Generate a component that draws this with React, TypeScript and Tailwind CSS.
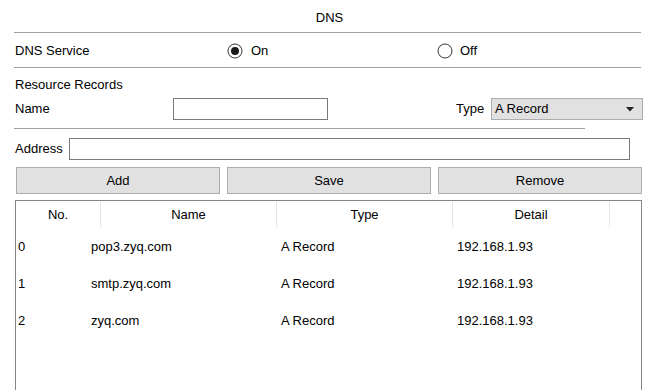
import React from "react";

function Radio({ checked }: { checked: boolean }) {
  return (
    <svg width="16" height="16" viewBox="0 0 16 16" className="shrink-0">
      <circle cx="8" cy="8" r="7" fill="#fff" stroke="#333" strokeWidth="1" />
      {checked && <circle cx="8" cy="8" r="4" fill="#1a1a1a" />}
    </svg>
  );
}

const rows = [
  { no: "0", name: "pop3.zyq.com", type: "A Record", detail: "192.168.1.93" },
  { no: "1", name: "smtp.zyq.com", type: "A Record", detail: "192.168.1.93" },
  { no: "2", name: "zyq.com", type: "A Record", detail: "192.168.1.93" },
];

export default function App() {
  return (
    <div
      className="w-[659px] h-[390px] overflow-hidden bg-white text-[13px] text-black"
      style={{ fontFamily: '"Liberation Sans", Arial, sans-serif' }}
    >
      {/* Title */}
      <div className="h-[32px] flex items-center justify-center pt-[4px]">DNS</div>
      <div className="ml-[14px] mr-[18px] h-px bg-[#a0a0a0]" />

      {/* DNS Service */}
      <div className="h-[34px] flex items-center pl-[15px] pt-[2px]">
        <div className="w-[212px]">DNS Service</div>
        <div className="w-[210px] flex items-center gap-[8px]">
          <Radio checked />
          <span>On</span>
        </div>
        <div className="flex items-center gap-[7px]">
          <Radio checked={false} />
          <span>Off</span>
        </div>
      </div>
      <div className="ml-[14px] mr-[18px] h-px bg-[#a0a0a0]" />

      {/* Resource Records */}
      <div className="h-[30px] flex items-center pl-[15px] pt-[3px]">Resource Records</div>

      {/* Name / Type */}
      <div className="h-[22px] flex items-center pl-[15px]">
        <div className="w-[158px]">Name</div>
        <div className="w-[155px] h-[22px] border border-[#7a7a7a] bg-white" />
        <div className="ml-[128px] w-[35px]">Type</div>
        <div className="w-[152px] h-[22px] border border-[#adadad] bg-[#e1e1e1] flex items-center justify-between pl-[3px] pr-[8px]">
          <span>A Record</span>
          <svg width="8" height="5" viewBox="0 0 8 5">
            <path d="M0 0 L8 0 L4 4.5 Z" fill="#222" />
          </svg>
        </div>
      </div>
      <div className="mt-[8px] ml-[14px] w-[571px] h-px bg-[#a0a0a0]" />

      {/* Address */}
      <div className="mt-[9px] h-[22px] flex items-center pl-[15px]">
        <div className="w-[54px]">Address</div>
        <div className="w-[561px] h-[22px] border border-[#7a7a7a] bg-white" />
      </div>

      {/* Buttons */}
      <div className="mt-[7px] flex pl-[16px] gap-[7px]">
        {["Add", "Save", "Remove"].map((b) => (
          <div
            key={b}
            className="w-[204px] h-[27px] border border-[#adadad] bg-[#e1e1e1] flex items-center justify-center"
          >
            {b}
          </div>
        ))}
      </div>

      {/* Table */}
      <div className="mt-[6px] ml-[15px] w-[627px] h-[200px] border border-[#828790] bg-white">
        <div className="flex h-[26px] pt-[1px]">
          <div className="w-[85px] border-r border-[#e5e5e5] flex items-center justify-center">No.</div>
          <div className="w-[176px] border-r border-[#e5e5e5] flex items-center justify-center">Name</div>
          <div className="w-[176px] border-r border-[#e5e5e5] flex items-center justify-center">Type</div>
          <div className="w-[157px] border-r border-[#e5e5e5] flex items-center justify-center">Detail</div>
        </div>
        {rows.map((r) => (
          <div key={r.no} className="flex h-[37px] items-center pt-[2px]">
            <div className="w-[75px] pl-[2px]">{r.no}</div>
            <div className="w-[190px]">{r.name}</div>
            <div className="w-[176px]">{r.type}</div>
            <div>{r.detail}</div>
          </div>
        ))}
      </div>
    </div>
  );
}
